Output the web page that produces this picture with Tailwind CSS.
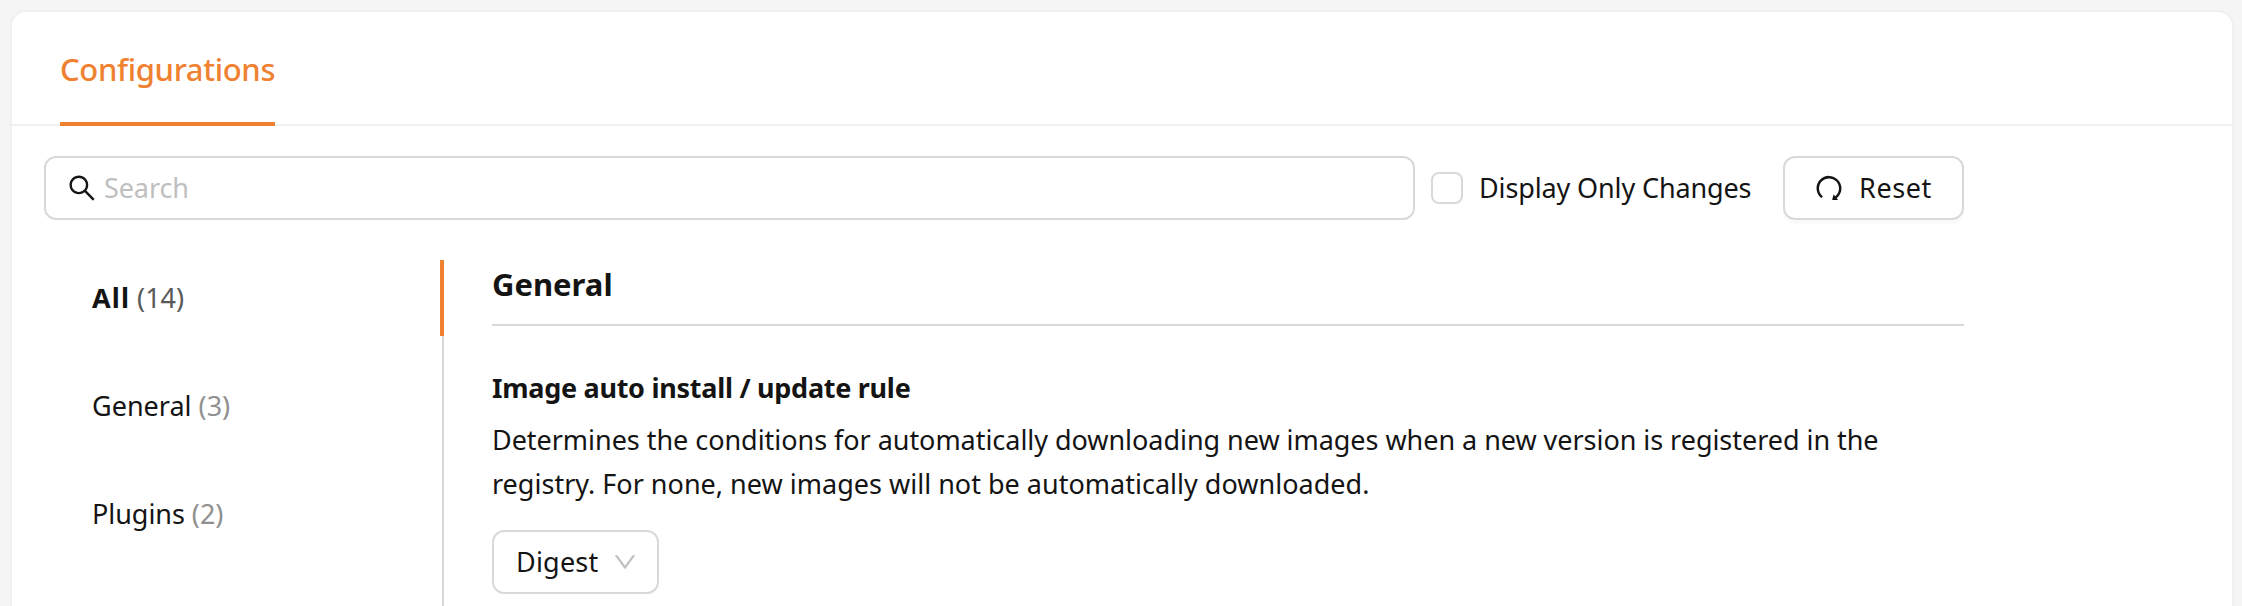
<!DOCTYPE html>
<html lang="en">
<head>
<meta charset="utf-8">
<title>Configurations</title>
<script src="https://cdn.jsdelivr.net/npm/@tailwindcss/browser@4"></script>
</head>
<body class="h-[606px] overflow-hidden bg-[#f5f5f5] px-2.5 pt-2.5 pr-2 font-['Noto_Sans','Open_Sans',sans-serif] text-[27px] leading-[44px] text-[#141414]">
<main class="h-[596px] w-[2224px] rounded-t-[16px] border-2 border-b-0 border-[#f0f0f0] bg-white">
  <nav class="flex h-[114px] border-b-2 border-[#f0f0f0] pl-12">
    <a class="h-[114px] w-[215px] border-b-4 border-[#ef8130] pt-[33px] text-[31px] leading-[48px] font-medium tracking-[-0.35px] whitespace-nowrap text-[#ef8130]">Configurations</a>
  </nav>
  <div class="w-[1952px] pt-[30px] pl-8">
    <div class="flex items-center">
      <div class="flex h-16 w-[1371px] items-center gap-2 rounded-[12px] border-2 border-[#d9d9d9] pl-[22px]">
        <svg class="size-7" viewBox="64 64 896 896" fill="#141414"><path d="M909.6 854.5L649.9 594.8C690.2 542.7 712 479 712 412c0-80.2-31.3-155.4-87.9-212.1-56.6-56.7-132-87.9-212.1-87.9s-155.5 31.3-212.1 87.9C143.2 256.5 112 331.8 112 412c0 80.1 31.3 155.5 87.9 212.1C256.5 680.8 331.8 712 412 712c67 0 130.6-21.8 182.7-62l259.7 259.6a8.2 8.2 0 0011.6 0l43.6-43.5a8.2 8.2 0 000-11.6zM570.4 570.4C528 612.7 471.8 636 412 636s-116-23.3-158.4-65.6C211.3 528 188 471.8 188 412s23.3-116.1 65.6-158.4C296 211.3 352.2 188 412 188s116.1 23.2 158.4 65.6S636 352.2 636 412s-23.3 116.1-65.6 158.4z"/></svg>
        <span class="tracking-[-0.1px] text-[#bfbfbf]">Search</span>
      </div>
      <label class="ml-4 flex items-center gap-4">
        <span class="size-8 rounded-[8px] border-2 border-[#d9d9d9]"></span>
        <span class="tracking-[-0.13px] whitespace-nowrap">Display Only Changes</span>
      </label>
      <button class="ml-auto flex h-16 w-[181px] items-center gap-4 rounded-[12px] border-2 border-[#d9d9d9] pl-[30px] shadow-[0_4px_0_rgba(0,0,0,0.02)]">
        <svg class="size-7" viewBox="64 64 896 896" fill="#141414"><path d="M758.2 839.1C851.8 765.9 912 651.9 912 523.9 912 303 733.5 124.3 512.6 124 291.4 123.7 112 302.8 112 523.9c0 125.2 57.5 236.9 147.6 310.2 3.5 2.8 8.6 2.2 11.4-1.3l39.4-50.5c2.7-3.4 2.1-8.3-1.2-11.1-8.1-6.6-15.9-13.7-23.4-21.2a318.64 318.64 0 01-68.6-101.7C200.4 609 192 567.1 192 523.9s8.4-85.1 25.1-124.5c16.1-38.1 39.2-72.3 68.6-101.7 29.4-29.4 63.6-52.5 101.7-68.6C426.9 212.4 468.8 204 512 204s85.1 8.4 124.5 25.1c38.1 16.1 72.3 39.2 101.7 68.6 29.4 29.4 52.5 63.6 68.6 101.7 16.7 39.4 25.1 81.3 25.1 124.5s-8.4 85.1-25.1 124.5a318.64 318.64 0 01-68.6 101.7c-9.3 9.3-19.1 18-29.3 26L668.2 724a8 8 0 00-14.1 3l-39.6 162.2c-1.2 5 2.6 9.9 7.7 9.9l167 .8c6.7 0 10.5-7.7 6.3-12.9l-37.3-47.9z"/></svg>
        <span class="tracking-[0.6px]">Reset</span>
      </button>
    </div>
    <div class="flex pt-10">
      <ul class="flex h-[346px] w-[400px] flex-col gap-8 border-r-2 border-[#d9d9d9]">
        <li class="mr-[-2px] flex h-[76px] items-center gap-[7px] border-r-4 border-[#ef8130] pl-12"><b class="tracking-[1.1px]">All</b><span class="text-[#595959]">(14)</span></li>
        <li class="flex h-[76px] items-center gap-[7px] pl-12"><span>General</span><span class="text-[#909090]">(3)</span></li>
        <li class="flex h-[76px] items-center gap-[7px] pl-12"><span class="tracking-[-0.05px]">Plugins</span><span class="text-[#909090]">(2)</span></li>
      </ul>
      <section class="ml-12 flex-1">
        <h2 class="h-[66px] border-b-2 border-[#d9d9d9] text-[31px] leading-[48px] font-bold">General</h2>
        <h3 class="mt-10 font-bold tracking-[-0.28px]">Image auto install / update rule</h3>
        <p class="mt-2 whitespace-nowrap"><span class="tracking-[-0.04px]">Determines the conditions for automatically downloading new images when a new version is registered in the</span><br><span class="tracking-[0.01px]">registry. For none, new images will not be automatically downloaded.</span></p>
        <div class="mt-6 flex h-16 w-[167px] items-center justify-between rounded-[12px] border-2 border-[#d9d9d9] pr-5 pl-[22px]">
          <span class="tracking-[0.2px]">Digest</span>
          <svg class="size-6" viewBox="64 64 896 896" fill="#bfbfbf"><path d="M884 256h-75c-5.1 0-9.9 2.5-12.9 6.6L512 654.2 227.9 262.6c-3-4.1-7.8-6.6-12.9-6.6h-75c-6.5 0-10.3 7.4-6.5 12.7l352.6 486.1c12.8 17.6 39 17.6 51.7 0l352.6-486.1c3.9-5.3.1-12.7-6.4-12.7z"/></svg>
        </div>
      </section>
    </div>
  </div>
</main>
</body>
</html>
